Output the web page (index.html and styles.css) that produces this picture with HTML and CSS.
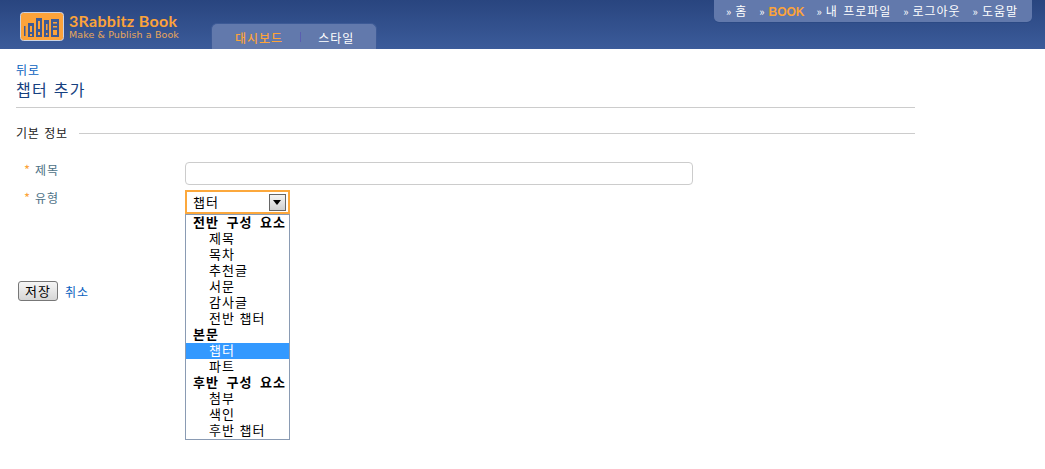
FILE: index.html
```html
<!DOCTYPE html>
<html lang="ko">
<head>
  <meta charset="UTF-8" />
  <title>챕터 추가</title>
  <link rel="stylesheet" href="styles.css">
</head>
<body>
  <header class="top">
    <a class="logo" href="#">
      <svg class="logo-icon" width="44" height="29" viewBox="0 0 44 29">
        <rect x="0.5" y="0.5" width="43" height="28" rx="3" fill="#fca33a" stroke="#c9d3e6"/>
        <g fill="#3d5a94">
          <rect x="4" y="14" width="1.5" height="10"/>
          <rect x="8" y="11" width="6" height="14"/>
          <rect x="16" y="6" width="6" height="19"/>
          <rect x="24" y="8" width="5" height="17"/>
          <rect x="31" y="7" width="8" height="18"/>
        </g>
        <g fill="#fca33a">
          <rect x="10" y="14" width="2" height="6"/>
          <rect x="10" y="22" width="2" height="2"/>
          <rect x="18" y="9" width="2" height="8"/>
          <rect x="18" y="20" width="2" height="3"/>
          <rect x="26" y="12" width="1.5" height="6"/>
          <rect x="26" y="21" width="1.5" height="2"/>
          <rect x="33" y="10" width="4" height="1.5"/>
          <rect x="33" y="14" width="4" height="1.5"/>
          <rect x="33" y="18" width="4" height="5"/>
        </g>
      </svg>
      <span class="logo-text">
        <span class="logo-name">3Rabbitz Book</span>
        <span class="logo-sub">Make &amp; Publish a Book</span>
      </span>
    </a>
    <nav class="tabs">
      <a class="tab active" href="#">대시보드</a>
      <span class="tab-sep"></span>
      <a class="tab" href="#">스타일</a>
    </nav>
    <ul class="user-menu">
      <li><a href="#">홈</a></li>
      <li><a class="current" href="#">BOOK</a></li>
      <li><a href="#">내 프로파일</a></li>
      <li><a href="#">로그아웃</a></li>
      <li><a href="#">도움말</a></li>
    </ul>
  </header>

  <main class="content">
    <a class="back" href="#">뒤로</a>
    <h1 class="page-title">챕터 추가</h1>

    <div class="legend"><span>기본 정보</span></div>

    <form class="form">
      <div class="row row-title">
        <label class="field-label"><i>*</i>제목</label>
        <input class="text-input" type="text" />
      </div>
      <div class="row row-type">
        <label class="field-label"><i>*</i>유형</label>
        <div class="select">
          <div class="select-box">
            <span>챕터</span>
            <span class="select-btn"></span>
          </div>
          <ul class="select-list">
            <li class="group">전반 구성 요소</li>
            <li>제목</li>
            <li>목차</li>
            <li>추천글</li>
            <li>서문</li>
            <li>감사글</li>
            <li>전반 챕터</li>
            <li class="group">본문</li>
            <li class="selected">챕터</li>
            <li>파트</li>
            <li class="group">후반 구성 요소</li>
            <li>첨부</li>
            <li>색인</li>
            <li>후반 챕터</li>
          </ul>
        </div>
      </div>
      <div class="actions">
        <button class="save" type="button">저장</button>
        <a class="cancel" href="#">취소</a>
      </div>
    </form>
  </main>
</body>
</html>
```

FILE: styles.css
```css
* {
  box-sizing: border-box;
  margin: 0;
  padding: 0;
}

html,
body {
  min-height: 469px;
}

body {
  background: #fff;
  color: #222;
  font-family: "Noto Sans CJK KR", "Liberation Sans", sans-serif;
  font-size: 12px;
  letter-spacing: 1px;
  word-spacing: 1px;
}

a {
  text-decoration: none;
}

ul {
  list-style: none;
}

.top {
  display: flex;
  height: 49px;
  padding-left: 20px;
  background: linear-gradient(#29457f, #3b5b9a);
}

.logo {
  display: flex;
  gap: 5px;
  width: 191px;
  padding-top: 12px;
}

.logo-text {
  display: flex;
  flex-direction: column;
}

.logo-name {
  color: #fca33a;
  font-family: "Lato", sans-serif;
  font-size: 16px;
  font-weight: bold;
  line-height: 17px;
  letter-spacing: 0.3px;
  word-spacing: 0;
  white-space: nowrap;
}

.logo-sub {
  color: #e9a75a;
  font-family: "DejaVu Sans", sans-serif;
  font-size: 9.5px;
  line-height: 11px;
  letter-spacing: 0.1px;
  word-spacing: 0;
  white-space: nowrap;
}

.tabs {
  display: flex;
  align-items: center;
  gap: 17px;
  width: 166px;
  height: 26px;
  margin-top: 23px;
  padding: 1px 0 0 23px;
  background: #6279ac;
  border: 1px solid #3d5a96;
  border-bottom: none;
  border-radius: 6px 6px 0 0;
}

.tab {
  color: #fff;
}

.tab.active {
  color: #fca33a;
  font-weight: 500;
}

.tab-sep {
  width: 1px;
  height: 10px;
  background: #5a5eb0;
}

.user-menu {
  display: flex;
  justify-content: space-between;
  width: 318px;
  height: 22px;
  margin: 0 13px 0 auto;
  padding: 0 14px 2px 12px;
  align-items: center;
  background: #6279ac;
  border-radius: 0 0 5px 5px;
  box-shadow: 0 1px 0 #2c4a85;
}

.user-menu li {
  white-space: nowrap;
}

.user-menu li::before {
  content: "»";
  margin-right: 3px;
  color: #fff;
  font-size: 11px;
}

.user-menu a {
  color: #fff;
}

.user-menu a.current {
  color: #fca33a;
  font-family: "Liberation Sans", sans-serif;
  font-weight: bold;
  letter-spacing: 0;
}

.content {
  width: 915px;
  padding: 13px 0 0 16px;
}

.back {
  display: block;
  color: #0a62c0;
  line-height: 16px;
}

.page-title {
  height: 30px;
  border-bottom: 1px solid #ccc;
  color: #17417f;
  font-size: 16px;
  font-weight: normal;
  line-height: 23px;
  letter-spacing: 1.3px;
  word-spacing: 0;
}

.legend {
  display: flex;
  align-items: center;
  gap: 11px;
  margin-top: 17px;
  line-height: 16px;
  letter-spacing: 0.6px;
}

.legend::after {
  content: "";
  flex: 1;
  height: 1px;
  background: #ccc;
}

.form {
  padding-top: 21px;
}

.row {
  display: flex;
  padding-left: 8px;
}

.row-title {
  height: 28px;
}

.row-type {
  height: 91px;
}

.field-label {
  display: flex;
  width: 161px;
  padding-top: 1px;
  color: #4d7186;
  line-height: 14px;
}

.field-label i {
  width: 11px;
  color: #fca33a;
  font-size: 13px;
  font-style: normal;
}

.text-input {
  width: 508px;
  height: 23px;
  border: 1px solid #ccc;
  border-radius: 4px;
  background: #fff;
}

.select {
  position: relative;
  width: 105px;
  font-size: 13px;
  letter-spacing: 1px;
  word-spacing: 0;
}

.select-box {
  display: flex;
  align-items: center;
  justify-content: space-between;
  height: 24px;
  padding: 0 2px 2px 6px;
  border: 2px solid #fca83c;
  color: #000;
}

.select-btn {
  position: relative;
  top: 1px;
  width: 17px;
  height: 17px;
  border: 1px solid #666;
  background: linear-gradient(#f4f4f4, #cfcfcf);
}

.select-btn::after {
  content: "";
  position: absolute;
  top: 5px;
  left: 3px;
  border: 4px solid transparent;
  border-top: 5px solid #000;
  border-bottom: none;
}

.select-list {
  position: absolute;
  top: 24px;
  left: 0;
  width: 105px;
  height: 226px;
  border: 1px solid #8a9bb3;
  background: #fff;
  color: #000;
  z-index: 5;
}

.select-list li {
  height: 16px;
  padding-left: 23px;
  line-height: 14px;
  white-space: nowrap;
}

.select-list li.group {
  padding-left: 7px;
  font-weight: bold;
  word-spacing: 3px;
}

.select-list li.selected {
  background: #3399ff;
  color: #fff;
}

.actions {
  display: flex;
  align-items: center;
  gap: 7px;
  padding-left: 2px;
}

.save {
  width: 40px;
  height: 20px;
  border: 1px solid #777;
  border-radius: 3px;
  background: linear-gradient(#f5f5f5, #d6d6d6);
  color: #000;
  font-family: "Noto Sans CJK KR", sans-serif;
  font-size: 13px;
  letter-spacing: 1px;
  line-height: 16px;
}

.cancel {
  color: #0a62c0;
  font-size: 12px;
}
```
